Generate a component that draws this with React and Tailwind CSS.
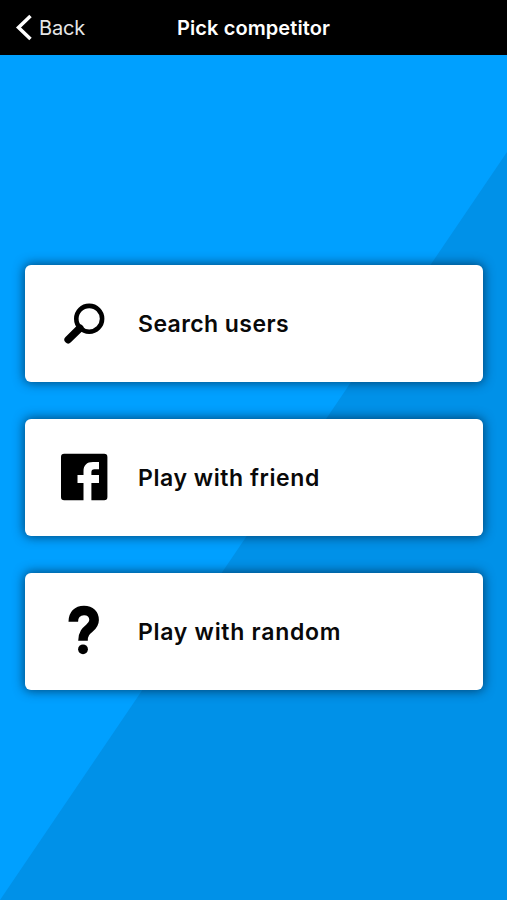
function SearchIcon() {
  return (
    <svg viewBox="0 0 50 50" className="size-[50px]" fill="none" stroke="#000">
      <circle cx="30.2" cy="20.8" r="12.900" strokeWidth="4.6" />
      <path d="M20.800 30.200 9.200 41.600" strokeWidth="7.600" strokeLinecap="round" />
    </svg>
  );
}

function FacebookIcon() {
  return (
    <svg viewBox="0 0 50 50" className="size-[50px]">
      <path
        fill="#000"
        d="M5.200 1.800h40a3.200 3.200 0 0 1 3.200 3.200v40a3.200 3.200 0 0 1-3.200 3.200H32.400V31h7.600V23h-7.600v-2.600c0-2.300.8-3.200 3.100-3.200H40V9.900h-6c-6.300 0-9.500 3.300-9.500 9.200V23h-6v8h6v17.200H5.200A3.200 3.200 0 0 1 2 45V5a3.200 3.200 0 0 1 3.200-3.200z"
      />
    </svg>
  );
}

function QuestionIcon() {
  return (
    <svg viewBox="0 0 50 50" className="size-[50px] overflow-visible">
      <path
        d="M14.300 15.800C14.300 8.500 18.500 4.500 25 4.500S35.100 8.500 35.100 14C35.100 23.500 24 21.500 24 34.700"
        fill="none"
        stroke="#000"
        strokeWidth="9.600"
      />
      <circle cx="24" cy="43.300" r="4.900" fill="#000" />
    </svg>
  );
}

function Option({ icon, label, tracking }) {
  return (
    <button className="flex h-[117.5px] w-full items-center rounded-[6px] bg-white pl-[34px] text-left shadow-[0_0_11px_1px_rgba(0,35,65,0.7)]">
      {icon}
      <span className={`ml-[29px] whitespace-nowrap pt-[2px] text-[23px] leading-7 font-semibold text-[#090909] ${tracking}`}>
        {label}
      </span>
    </button>
  );
}

export default function App() {
  return (
    <div className="relative isolate flex h-[900px] w-[507px] flex-col overflow-hidden bg-[#00a0ff] font-['Inter','Liberation_Sans',sans-serif]">
      <div className="absolute inset-0 -z-10 bg-[#0091e8] [clip-path:polygon(507px_152px,507px_900px,0px_900px)]" />
      <header className="grid h-[54.5px] shrink-0 grid-cols-3 items-center bg-black text-white">
        <button className="flex items-center pl-[15px] text-[20px] leading-6 tracking-[-0.2px] text-[#e6e6e6]">
          <svg viewBox="0 0 18 28" className="mr-[6px] h-[28px] w-[18px]" fill="none" stroke="#fff" strokeWidth="3.5">
            <path d="M15.500 3 3.500 14.500l12 11.500" />
          </svg>
          <span className="pt-[2px]">Back</span>
        </button>
        <h1 className="pt-[2px] text-center text-[20px] leading-6 font-semibold tracking-[0.1px] whitespace-nowrap">Pick competitor</h1>
      </header>
      <main className="flex flex-col gap-[36.5px] pt-[210px] pr-[24.5px] pl-[25px]">
        <Option icon={<SearchIcon />} label="Search users" tracking="tracking-[0.42px]" />
        <Option icon={<FacebookIcon />} label="Play with friend" tracking="tracking-[0.57px]" />
        <Option icon={<QuestionIcon />} label="Play with random" tracking="tracking-[0.72px]" />
      </main>
    </div>
  );
}
